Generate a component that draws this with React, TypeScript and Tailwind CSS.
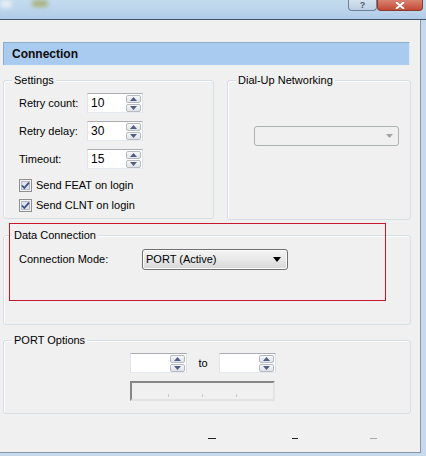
import React from "react";

function SpinButtons() {
  return (
    <div className="flex flex-col gap-[1px] mr-[1px]">
      <div className="w-[15px] h-[8px] rounded-[2px] border border-[#b4b9c2] bg-gradient-to-b from-[#f7f8fa] to-[#dfe2e8] flex items-center justify-center">
        <svg width="7" height="4" viewBox="0 0 7 4"><path d="M3.5 0 L7 4 L0 4 Z" fill="#4f5f80" /></svg>
      </div>
      <div className="w-[15px] h-[8px] rounded-[2px] border border-[#b4b9c2] bg-gradient-to-b from-[#f7f8fa] to-[#dfe2e8] flex items-center justify-center">
        <svg width="7" height="4" viewBox="0 0 7 4"><path d="M0 0 L7 0 L3.5 4 Z" fill="#4f5f80" /></svg>
      </div>
    </div>
  );
}

function Spin({ value, w }: { value?: string; w: string }) {
  return (
    <div className={`${w} h-[20px] bg-white border border-[#abadb3] border-l-[#e2e3ea] border-r-[#dbdfe6] border-b-[#e3e9ef] flex items-center justify-between`}>
      <span className="pl-[3px] text-[12px] leading-none text-black">{value}</span>
      <SpinButtons />
    </div>
  );
}

function Group({ label, className, children }: { label: string; className: string; children?: React.ReactNode }) {
  return (
    <div className={`relative border border-[#d5dfe5] rounded-[3px] shadow-[inset_1px_1px_0_#ffffff] ${className}`}>
      <span className="absolute left-[8px] -top-[7px] px-[2px] bg-[#f0f0f0] leading-[13px] text-black">{label}</span>
      {children}
    </div>
  );
}

function Check({ label }: { label: string }) {
  return (
    <div className="flex items-center h-[16px]">
      <svg width="13" height="13" viewBox="0 0 13 13" className="shrink-0">
        <rect x="0.5" y="0.5" width="12" height="12" fill="#f4f4f4" stroke="#8e8f8f" />
        <rect x="2.5" y="2.5" width="8" height="8" fill="#dfe3ea" stroke="#b3b8c2" />
        <path d="M3 6.5 L5.3 9 L10 3.6" fill="none" stroke="#3b4f86" strokeWidth="1.8" />
      </svg>
      <span className="ml-[4px] text-black">{label}</span>
    </div>
  );
}

export default function App() {
  return (
    <div
      className="w-[426px] h-[456px] flex flex-col overflow-hidden bg-[#c6d9ed] text-[11px]"
      style={{ fontFamily: '"Liberation Sans", Arial, sans-serif' }}
    >
      {/* title bar */}
      <div className="relative h-[19px] bg-gradient-to-b from-[#c3dbee] via-[#bcd5ec] to-[#b0cbe8] flex justify-end pr-[3px]">
        <div className="absolute left-[0px] top-[0px] w-[12px] h-[8px] rounded-full bg-[#e6eef4] blur-[2px]" />
        <div className="absolute left-[32px] top-[0px] w-[16px] h-[7px] rounded-full bg-[#a9b27e] blur-[2px]" />
        <div className="w-[29px] h-[11px] rounded-b-[4px] border border-t-0 border-[#6f8198] bg-gradient-to-b from-[#d6e2ee] to-[#bccfe3] flex items-center justify-center">
          <span className="text-[9px] leading-[10px] text-[#4b5d74] font-bold">?</span>
        </div>
        <div className="w-[46px] h-[11px] rounded-b-[4px] border border-t-0 border-[#8b3b30] bg-gradient-to-b from-[#d8826e] to-[#c24a36] flex items-center justify-center">
          <svg width="10" height="7" viewBox="0 0 10 7">
            <path d="M1 0 L9 7 M9 0 L1 7" stroke="#ffffff" strokeWidth="2" />
          </svg>
        </div>
      </div>
      <div className="h-px bg-[#42536a]" />

      {/* dialog body */}
      <div className="relative w-[421px] h-[433px] bg-[#f0f0f0] border-r border-b border-[#8996a6] flex flex-col">
        {/* header */}
        <div className="mt-[22px] ml-[3px] w-[407px] h-[23px] bg-[#a9cbf0] border-t border-l border-[#8faccc] border-r-[#ddeafa] border-r flex items-center pl-[8px]">
          <span className="font-bold text-[12px] text-[#0c0c0c]">Connection</span>
        </div>

        {/* settings + dialup */}
        <div className="mt-[15px] flex">
          <Group label="Settings" className="ml-[3px] w-[211px] h-[139px] pt-[12px] pl-[15px]">
            <div className="flex flex-col gap-[8px]">
              <div className="flex items-center">
                <span className="w-[68px]">Retry count:</span>
                <Spin value="10" w="w-[56px]" />
              </div>
              <div className="flex items-center">
                <span className="w-[68px]">Retry delay:</span>
                <Spin value="30" w="w-[56px]" />
              </div>
              <div className="flex items-center">
                <span className="w-[68px]">Timeout:</span>
                <Spin value="15" w="w-[56px]" />
              </div>
            </div>
            <div className="mt-[8px] flex flex-col gap-[4px]">
              <Check label="Send FEAT on login" />
              <Check label="Send CLNT on login" />
            </div>
          </Group>
          <Group label="Dial-Up Networking" className="ml-[13px] w-[184px] h-[140px] pt-[45px] pl-[26px]">
            <div className="w-[145px] h-[20px] rounded-[3px] border border-[#adb2b5] bg-[#f0f0f0] flex items-center justify-end pr-[5px]">
              <svg width="7" height="4" viewBox="0 0 7 4"><path d="M0 0 L7 0 L3.5 4 Z" fill="#a3a3a3" /></svg>
            </div>
          </Group>
        </div>

        {/* data connection */}
        <Group label="Data Connection" className="mt-[15px] ml-[3px] w-[408px] h-[90px] pt-[13px] pl-[15px]">
          <div className="flex items-center">
            <span className="w-[123px]">Connection Mode:</span>
            <div className="w-[146px] h-[21px] rounded-[3px] border border-[#707070] bg-gradient-to-b from-[#f4f4f4] via-[#e8e8e8] to-[#d6d6d6] flex items-center justify-between pl-[3px] pr-[6px] shadow-[inset_0_0_0_1px_#fcfcfc]">
              <span className="text-black">PORT (Active)</span>
              <svg width="8" height="5" viewBox="0 0 8 5"><path d="M0 0 L8 0 L4 5 Z" fill="#000" /></svg>
            </div>
          </div>
        </Group>

        {/* port options */}
        <Group label="PORT Options" className="mt-[15px] ml-[3px] w-[408px] h-[74px] pt-[12px] pl-[126px]">
          <div className="flex items-center">
            <Spin w="w-[57px]" />
            <span className="w-[32px] text-center">to</span>
            <Spin w="w-[57px]" />
          </div>
          <div className="mt-[8px] w-[145px] h-[20px] border-2 border-[#878787] border-r-[#e3e3e3] border-b-[#e3e3e3] bg-[#f0f0f0] flex items-end justify-around px-[20px] pb-[2px]">
            <span className="w-px h-[3px] bg-[#c8c8c8]" />
            <span className="w-px h-[3px] bg-[#c8c8c8]" />
            <span className="w-px h-[3px] bg-[#c8c8c8]" />
          </div>
        </Group>

        {/* bottom accelerator marks */}
        <div className="mt-[24px] flex items-center">
          <span className="ml-[208px] w-[8px] h-[1px] bg-[#222]" />
          <span className="ml-[76px] w-[6px] h-[1px] bg-[#222]" />
          <span className="ml-[72px] w-[7px] h-[1px] bg-[#a8a8a8]" />
        </div>

        {/* red annotation rectangle */}
        <div className="absolute left-[9px] top-[203px] w-[377px] h-[78px] border border-[#c8162a] pointer-events-none" />
      </div>
    </div>
  );
}
